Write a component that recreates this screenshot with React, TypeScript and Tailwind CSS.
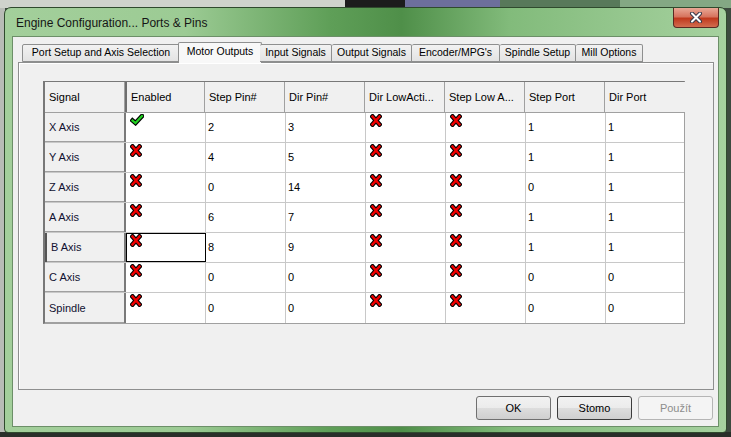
import React from 'react'

// Engine Configuration dialog (Mach3 "Ports & Pins", Motor Outputs tab)

type Cell = string | 'ok' | 'no'

const COLUMNS = ['Signal', 'Enabled', 'Step Pin#', 'Dir Pin#', 'Dir LowActi...', 'Step Low A...', 'Step Port', 'Dir Port']

const ROWS: Cell[][] = [
  ['X Axis',  'ok', '2', '3',  'no', 'no', '1', '1'],
  ['Y Axis',  'no', '4', '5',  'no', 'no', '1', '1'],
  ['Z Axis',  'no', '0', '14', 'no', 'no', '0', '1'],
  ['A Axis',  'no', '6', '7',  'no', 'no', '1', '1'],
  ['B Axis',  'no', '8', '9',  'no', 'no', '1', '1'],
  ['C Axis',  'no', '0', '0',  'no', 'no', '0', '0'],
  ['Spindle', 'no', '0', '0',  'no', 'no', '0', '0'],
]

const TABS = [
  { label: 'Port Setup and Axis Selection', w: 'w-[158px]' },
  { label: 'Motor Outputs',                 w: 'w-[84px]', active: true },
  { label: 'Input Signals',                 w: 'w-[72px]' },
  { label: 'Output Signals',                w: 'w-[80px]' },
  { label: 'Encoder/MPG\'s',                w: 'w-[88px]' },
  { label: 'Spindle Setup',                 w: 'w-[76px]' },
  { label: 'Mill Options',                  w: 'w-[67px]' },
]

function CheckIcon() {
  return (
    <svg width="14" height="12" viewBox="0 0 14 12" className="block">
      <path d="M2.5 6.5 L5.5 9 L12 2" fill="none" stroke="#000" strokeWidth="4.5" strokeLinejoin="miter" strokeLinecap="square" />
      <path d="M2.5 6.5 L5.5 9 L12 2" fill="none" stroke="#22d322" strokeWidth="2.2" strokeLinejoin="miter" strokeLinecap="square" />
    </svg>
  )
}

function CrossIcon() {
  return (
    <svg width="12" height="13" viewBox="0 0 12 13" className="block">
      <path d="M2.5 2.5 L9.5 10.5 M9.5 2.5 L2.5 10.5" stroke="#000" strokeWidth="4.6" strokeLinecap="square" />
      <path d="M2.5 2.5 L9.5 10.5 M9.5 2.5 L2.5 10.5" stroke="#f00000" strokeWidth="2.4" strokeLinecap="square" />
    </svg>
  )
}

function CloseGlyph() {
  return (
    <svg width="14" height="11" viewBox="0 0 14 11" className="block">
      <path d="M3 1.5 L11 9.5 M11 1.5 L3 9.5" stroke="#3a3a4a" strokeWidth="4" strokeLinecap="round" />
      <path d="M3 1.5 L11 9.5 M11 1.5 L3 9.5" stroke="#fff" strokeWidth="2" strokeLinecap="round" />
    </svg>
  )
}

function Button({ label, variant }: { label: string; variant?: 'focus' | 'disabled' }) {
  const border =
    variant === 'focus' ? 'border-[#3c3c3c]' :
    variant === 'disabled' ? 'border-[#b5b5b5]' : 'border-[#707070]'
  const text = variant === 'disabled' ? 'text-[#8d8d8d]' : 'text-black'
  const bg = variant === 'disabled'
    ? 'bg-[#f4f4f4]'
    : 'bg-[linear-gradient(#f2f2f2_0%,#ebebeb_50%,#dddddd_51%,#cfcfcf_100%)]'
  return (
    <div className={`w-[75px] h-[24px] rounded-[3px] border ${border} ${bg} ${text} flex items-center justify-center text-[11px]`}>
      {label}
    </div>
  )
}

export default function App() {
  return (
    <div className="w-[731px] h-[437px] overflow-hidden bg-[#3d4a3f] font-['Liberation_Sans',Arial,sans-serif] relative">
      {/* desktop behind the dialog */}
      <div className="absolute left-0 top-0 w-[731px] h-[8px] flex">
        <div className="w-[345px] bg-[#cfd3cc]" />
        <div className="w-[60px] bg-[#1c1c1c]" />
        <div className="w-[95px] bg-[#6d6f9c]" />
        <div className="w-[120px] bg-[#58795a]" />
        <div className="flex-1 bg-[#84a884]" />
      </div>
      <div className="absolute left-0 top-[8px] w-[5px] h-[429px] bg-[#b8bcb6]" />
      <div className="absolute left-0 bottom-0 w-[731px] h-[5px] bg-[#2a2f2a]" />

      {/* dialog window */}
      <div className="absolute left-[4px] top-[7px] w-[723px] h-[426px] rounded-t-[7px] rounded-b-[4px] border border-[#2f4a2d] bg-[linear-gradient(90deg,#a3cf9b_0%,#9ccb94_25%,#5f9f58_45%,#4f8f49_55%,#82bb7b_70%,#a6d19f_100%)] flex flex-col">
        {/* title bar */}
        <div className="h-[28px] flex items-start">
          <div className="pl-[11px] pt-[6px] text-[12px] text-[#151515]">Engine Configuration... Ports &amp; Pins</div>
          <div className="ml-auto mr-[7px] w-[46px] h-[20px] rounded-b-[4px] border border-t-0 border-[#5a2a22] bg-[linear-gradient(#e9a896_0%,#d7755f_45%,#c03a1e_55%,#d26d4f_100%)] flex items-center justify-center">
            <CloseGlyph />
          </div>
        </div>

        {/* client area */}
        <div className="mx-[7px] mb-[5px] flex-1 bg-[#f0f0f0] border border-[#6c8f68] flex flex-col">
          {/* tabs */}
          <div className="h-[26px] flex items-end pl-[9px] relative z-10">
            {TABS.map(t => (
              <div key={t.label}
                   className={`${t.w} shrink-0 flex items-center justify-center whitespace-nowrap text-[10.5px] text-black border border-[#8e8f8f] rounded-t-[2px] ${
                     t.active
                       ? 'h-[21px] -mx-[2px] pb-[3px] bg-[#f8f8f8] border-b-0'
                       : 'h-[18px] mb-px bg-[linear-gradient(#f2f2f2,#e3e3e3)] border-l-0 first:border-l'
                   }`}>
                {t.label}
              </div>
            ))}
          </div>

          {/* tab page */}
          <div className="-mt-px ml-[5px] mr-[4px] h-[328px] border border-[#8e8f8f] bg-[#f0f0f0] shadow-[inset_1px_1px_0_#ffffff] pl-[24px] pt-[18px]">
            <div className="w-[642px] border-l-2 border-t border-[#787878] border-r border-b border-r-[#a0a0a0] border-b-[#a0a0a0] bg-white">
              {/* header row */}
              <div className="flex h-[31px] border-b border-[#a0a0a0]">
                {COLUMNS.map((c, i) => (
                  <div key={c}
                       className={`w-[80px] shrink-0 flex items-center bg-[#f0f0f0] text-[11px] text-black border-r border-[#a0a0a0] ${
                         i === 0 ? 'pl-[4px] w-[79px]' : 'pl-[4px]'
                       } ${i === 1 ? 'border-l-2 border-l-[#6e6e6e]' : ''} last:border-r-0`}>
                    {c}
                  </div>
                ))}
              </div>
              {/* data rows */}
              {ROWS.map((r, ri) => (
                <div key={ri} className="flex h-[30px] border-b border-[#c8c8c8] last:border-b-0">
                  {r.map((v, ci) => {
                    if (ci === 0) {
                      return (
                        <div key={ci}
                             className={`w-[81px] shrink-0 flex items-center pl-[4px] bg-[#f0f0f0] text-[11px] text-[#101030] border-r-2 border-r-[#7a7a7a] ${
                               ri === 4 ? 'border-l-2 border-l-[#555]' : ''
                             } shadow-[inset_0_-1px_0_#a0a0a0]`}>
                          {v}
                        </div>
                      )
                    }
                    const focus = ri === 4 && ci === 1
                    return (
                      <div key={ci}
                           className={`w-[80px] shrink-0 border-r border-[#c8c8c8] last:border-r-0 text-[11px] text-black ${
                             focus ? 'outline outline-1 outline-black -outline-offset-1' : ''
                           } ${v === 'ok' || v === 'no' ? 'pl-[4px] pt-[1px]' : 'flex items-center pl-[2px]'}`}>
                        {v === 'ok' ? <CheckIcon /> : v === 'no' ? <CrossIcon /> : v}
                      </div>
                    )
                  })}
                </div>
              ))}
            </div>
          </div>

          {/* buttons */}
          <div className="flex justify-end gap-[6px] pr-[5px] pt-[6px]">
            <Button label="OK" />
            <Button label="Stomo" variant="focus" />
            <Button label="Použít" variant="disabled" />
          </div>
        </div>
      </div>
    </div>
  )
}
